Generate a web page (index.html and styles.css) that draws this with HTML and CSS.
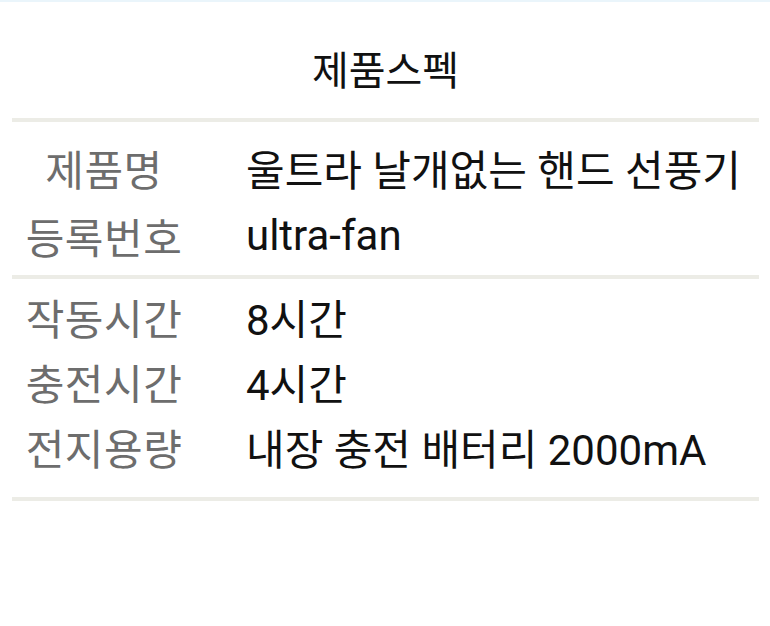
FILE: index.html
```html
<!DOCTYPE html>
<html lang="ko">
<head>
<meta charset="utf-8">
<link rel="stylesheet" href="styles.css">
</head>
<body>
<div class="page">
  <h1 class="title">제품스펙</h1>
  <div class="divider"></div>
  <div class="spec spec-a">
    <div class="label">제품명</div><div class="value">울트라 날개없는 핸드 선풍기</div>
    <div class="label">등록번호</div><div class="value">ultra-fan</div>
  </div>
  <div class="divider"></div>
  <div class="spec spec-b">
    <div class="label">작동시간</div><div class="value">8시간</div>
    <div class="label">충전시간</div><div class="value">4시간</div>
    <div class="label">전지용량</div><div class="value">내장 충전 배터리 2000mA</div>
  </div>
  <div class="divider"></div>
</div>
</body>
</html>
```
FILE: styles.css
```css
html, body {
  margin: 0;
  padding: 0;
  background: #ffffff;
}
body {
  font-family: Roboto, "Noto Sans CJK KR", sans-serif;
  border-top: 2px solid #eaf5fb;
}
.page {
  padding: 0 11px 0 12px;
}
.title {
  margin: 0;
  height: 116px;
  display: flex;
  align-items: center;
  justify-content: center;
  font-size: 40px;
  font-weight: 400;
  color: #111;
  padding-top: 15px;
  box-sizing: border-box;
}
.divider {
  height: 4px;
  background: #ecece6;
}
.spec {
  display: grid;
  grid-template-columns: 184px 1fr;
  column-gap: 50px;
  font-size: 42px;
}
.spec-a {
  padding: 11px 0 6px;
  grid-auto-rows: 68px;
}
.spec-b {
  padding: 5px 0 18px;
  grid-auto-rows: 65px;
}
.label {
  color: #6d6d6d;
  text-align: center;
  white-space: nowrap;
  display: flex;
  align-items: center;
  justify-content: center;
  letter-spacing: 0.5px;
}
.value {
  color: #111;
  white-space: nowrap;
  display: flex;
  align-items: center;
}
```
